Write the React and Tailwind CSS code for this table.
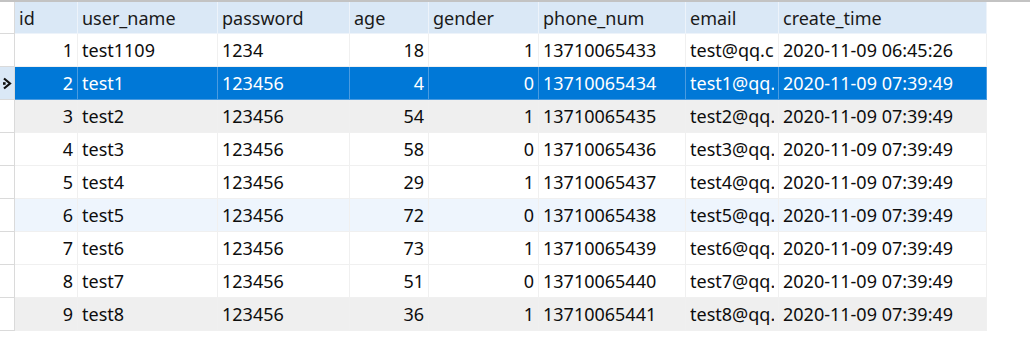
const columns = [
  { key: "id", label: "id", width: "w-[63px]", right: true },
  { key: "user_name", label: "user_name", width: "w-[140px]" },
  { key: "password", label: "password", width: "w-[132px]" },
  { key: "age", label: "age", width: "w-[79px]", right: true },
  { key: "gender", label: "gender", width: "w-[110px]", right: true },
  { key: "phone_num", label: "phone_num", width: "w-[147px]" },
  { key: "email", label: "email", width: "w-[93px]", clip: true },
  { key: "create_time", label: "create_time", width: "w-[208px]" }
];

const rows = [
  { id: 1, user_name: "test1109", password: "1234", age: 18, gender: 1, phone_num: "13710065433", email: "test@qq.com", create_time: "2020-11-09 06:45:26" },
  { id: 2, user_name: "test1", password: "123456", age: 4, gender: 0, phone_num: "13710065434", email: "test1@qq.com", create_time: "2020-11-09 07:39:49" },
  { id: 3, user_name: "test2", password: "123456", age: 54, gender: 1, phone_num: "13710065435", email: "test2@qq.com", create_time: "2020-11-09 07:39:49" },
  { id: 4, user_name: "test3", password: "123456", age: 58, gender: 0, phone_num: "13710065436", email: "test3@qq.com", create_time: "2020-11-09 07:39:49" },
  { id: 5, user_name: "test4", password: "123456", age: 29, gender: 1, phone_num: "13710065437", email: "test4@qq.com", create_time: "2020-11-09 07:39:49" },
  { id: 6, user_name: "test5", password: "123456", age: 72, gender: 0, phone_num: "13710065438", email: "test5@qq.com", create_time: "2020-11-09 07:39:49" },
  { id: 7, user_name: "test6", password: "123456", age: 73, gender: 1, phone_num: "13710065439", email: "test6@qq.com", create_time: "2020-11-09 07:39:49" },
  { id: 8, user_name: "test7", password: "123456", age: 51, gender: 0, phone_num: "13710065440", email: "test7@qq.com", create_time: "2020-11-09 07:39:49" },
  { id: 9, user_name: "test8", password: "123456", age: 36, gender: 1, phone_num: "13710065441", email: "test8@qq.com", create_time: "2020-11-09 07:39:49" }
];

// row backgrounds as seen: selected, hovered grey, light blue
const rowStyle = (id) => {
  if (id === 2) return "bg-[#0078d7] text-white";
  if (id === 3 || id === 9) return "bg-[#efefef] text-[#0d0d0d]";
  if (id === 6) return "bg-[#eef5fd] text-[#0d0d0d]";
  return "bg-white text-[#0d0d0d]";
};

function Arrow() {
  return (
    <svg width="10" height="13" viewBox="0 0 10 13" fill="none">
      <path d="M2 1.5 L8 6.5 L2 11.5" stroke="#111" strokeWidth="2.2" />
      <rect x="1" y="5.2" width="2.6" height="2.6" fill="#111" />
    </svg>
  );
}

export default function App() {
  return (
    <div className="w-[1030px] h-[343px] bg-white font-['Noto_Sans',sans-serif] text-[18px] leading-[24px] overflow-hidden">
      <div className="h-[2px] w-full bg-[#c3c3c3]"></div>

      {/* header */}
      <div className="flex h-[32px]">
        <div className="w-[15px] shrink-0 border-r border-b border-[#dadada] bg-white"></div>
        {columns.map((c) => (
          <div
            key={c.key}
            className={`${c.width} shrink-0 flex items-center px-[4px] bg-[#dae8f6] border-r border-b border-[#edf3fa] text-[#1a1a1a]`}
          >
            {c.label}
          </div>
        ))}
      </div>

      {rows.map((r) => (
        <div key={r.id} className="flex h-[33px]">
          <div
            className={`w-[15px] shrink-0 flex items-center justify-center border-r border-b border-[#dadada] ${
              r.id === 2 ? "bg-[#dae8f6]" : "bg-white"
            }`}
          >
            {r.id === 2 && <Arrow />}
          </div>
          {columns.map((c) => (
            <div
              key={c.key}
              className={`${c.width} shrink-0 flex items-center overflow-hidden whitespace-nowrap px-[4px] border-r border-b ${
                r.id === 2 ? "border-[#4a9be0]" : "border-[#f0f0f0]"
              } ${c.right ? "justify-end" : ""} ${rowStyle(r.id)}`}
            >
              {c.clip ? (
                <span className="block w-full overflow-hidden">{r[c.key]}</span>
              ) : (
                r[c.key]
              )}
            </div>
          ))}
        </div>
      ))}
    </div>
  );
}
